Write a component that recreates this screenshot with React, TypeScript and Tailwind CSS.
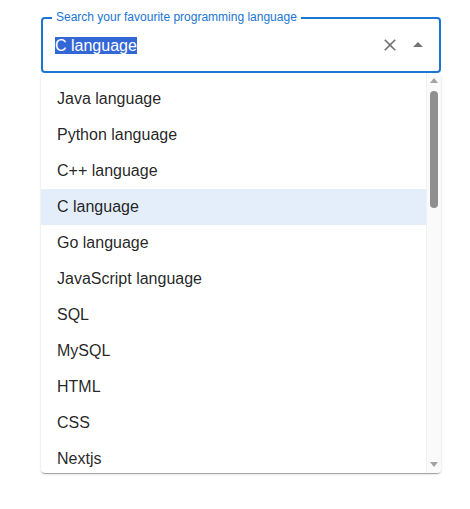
import React from "react";

const options = [
  "Java language",
  "Python language",
  "C++ language",
  "C language",
  "Go language",
  "JavaScript language",
  "SQL",
  "MySQL",
  "HTML",
  "CSS",
  "Nextjs",
];

export default function App() {
  return (
    <div
      className="w-[470px] h-[509px] bg-white"
      style={{ fontFamily: "'Liberation Sans', Arial, sans-serif" }}
    >
      <div className="pt-[17px] pl-[41px] w-[441px]">
        <div className="relative w-[400px] h-[56px] border-2 border-[#1976d2] rounded-[4px] flex items-center pl-[12px] pr-[7px]">
          <span className="absolute left-[9px] top-[-10px] bg-white px-[4px] text-[12px] leading-[17px] text-[#1976d2] whitespace-nowrap">
            Search your favourite programming language
          </span>
          <div className="flex-1 text-[16px] leading-[23px] text-[rgba(0,0,0,0.87)]">
            <span className="bg-[#3367d6] text-white">C language</span>
          </div>
          <div className="flex items-center">
            <button className="p-[4px] text-[rgba(0,0,0,0.54)]">
              <svg width="20" height="20" viewBox="0 0 24 24" fill="currentColor">
                <path d="M19 6.41 17.59 5 12 10.59 6.41 5 5 6.41 10.59 12 5 17.59 6.41 19 12 13.41 17.59 19 19 17.59 13.41 12z" />
              </svg>
            </button>
            <button className="p-[2px] text-[rgba(0,0,0,0.54)]">
              <svg width="24" height="24" viewBox="0 0 24 24" fill="currentColor">
                <path d="m7 14 5-5 5 5z" />
              </svg>
            </button>
          </div>
        </div>
        <div className="w-[400px] h-[400px] bg-white rounded-[4px] shadow-[0px_2px_1px_-1px_rgba(0,0,0,0.2),0px_1px_1px_0px_rgba(0,0,0,0.14),0px_1px_3px_0px_rgba(0,0,0,0.12)] flex overflow-hidden">
          <ul className="flex-1 overflow-hidden pt-[8px]">
            {options.map((o) => (
              <li
                key={o}
                className={
                  "h-[36px] px-[16px] flex items-center text-[16px] text-[rgba(0,0,0,0.87)] " +
                  (o === "C language" ? "bg-[rgba(25,118,210,0.12)]" : "")
                }
              >
                {o}
              </li>
            ))}
          </ul>
          <div className="w-[15px] bg-[#fafafa] border-l border-[#f0f0f0] flex flex-col items-center">
            <div className="h-[15px] flex items-center justify-center">
              <svg width="8" height="5" viewBox="0 0 8 5">
                <path d="M0 5 L4 0 L8 5 Z" fill="#a3a3a3" />
              </svg>
            </div>
            <div className="w-[8px] h-[117px] mt-[3px] rounded-full bg-[#8f8f8f]" />
            <div className="flex-1" />
            <div className="h-[15px] flex items-center justify-center mb-[1px]">
              <svg width="8" height="5" viewBox="0 0 8 5">
                <path d="M0 0 L4 5 L8 0 Z" fill="#a3a3a3" />
              </svg>
            </div>
          </div>
        </div>
      </div>
    </div>
  );
}
